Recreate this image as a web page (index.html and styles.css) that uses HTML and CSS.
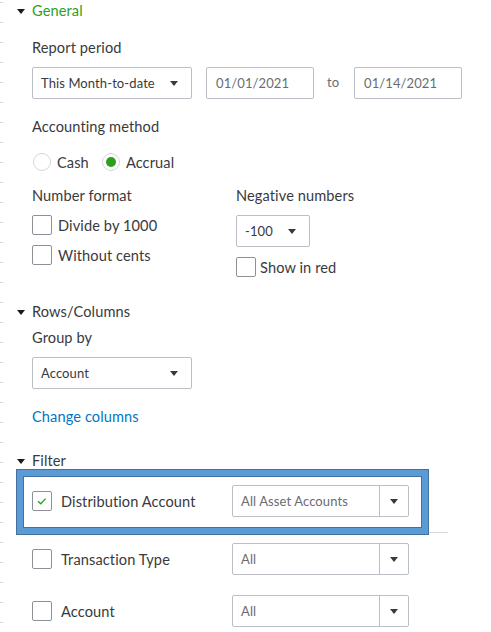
FILE: index.html
```html
<!DOCTYPE html>
<html>
<head>
<meta charset="utf-8">
<link rel="stylesheet" href="styles.css">
</head>
<body>
<div class="page">
  <div class="sec-head green"><span class="tri"></span>General</div>
  <div class="label lbl-report">Report period</div>
  <div class="period-row">
    <div class="select sel-period"><span>This Month-to-date</span><span class="arrow"></span></div>
    <div class="input date1">01/01/2021</div>
    <span class="to">to</span>
    <div class="input date2">01/14/2021</div>
  </div>
  <div class="label lbl-acct">Accounting method</div>
  <div class="radios">
    <label class="radio"><span class="circle"></span>Cash</label>
    <label class="radio"><span class="circle on"></span>Accrual</label>
  </div>
  <div class="two-col">
    <div class="col col-left">
      <div class="label">Number format</div>
      <label class="check c1"><span class="box"></span>Divide by 1000</label>
      <label class="check c2"><span class="box"></span>Without cents</label>
    </div>
    <div class="col col-right">
      <div class="label">Negative numbers</div>
      <div class="select sel-neg"><span>-100</span><span class="arrow"></span></div>
      <label class="check c3"><span class="box"></span>Show in red</label>
    </div>
  </div>
  <div class="sec-head rows-head"><span class="tri"></span>Rows/Columns</div>
  <div class="label lbl-group">Group by</div>
  <div class="select sel-group"><span>Account</span><span class="arrow"></span></div>
  <a class="link">Change columns</a>
  <div class="sec-head filter-head"><span class="tri"></span>Filter</div>
  <div class="filters">
    <div class="frow frow1">
      <span class="box checked"><svg width="12" height="10" viewBox="0 0 12 10"><path d="M2 5.2 L4.8 7.8 L9.6 2.6" fill="none" stroke="#2CA01C" stroke-width="1.3"/></svg></span>
      <span class="flabel">Distribution Account</span>
      <div class="fselect"><span class="ftext">All Asset Accounts</span><span class="farrow"><span class="arrow"></span></span></div>
      <div class="highlight"></div>
    </div>
    <div class="frow frow2">
      <span class="box"></span>
      <span class="flabel">Transaction Type</span>
      <div class="fselect"><span class="ftext">All</span><span class="farrow"><span class="arrow"></span></span></div>
    </div>
    <div class="frow frow3">
      <span class="box"></span>
      <span class="flabel">Account</span>
      <div class="fselect"><span class="ftext">All</span><span class="farrow"><span class="arrow"></span></span></div>
    </div>
  </div>
</div>
</body>
</html>
```
FILE: styles.css
```css
html, body {
  margin: 0;
  padding: 0;
  background: #fff;
}
body {
  font-family: Lato, "Open Sans", sans-serif;
  font-size: 14.6px;
  letter-spacing: 0.1px;
  color: #393a3d;
  width: 491px;
  height: 632px;
  overflow: hidden;
  background-image: repeating-linear-gradient(to bottom, transparent 0, transparent 2px, #d6d7da 2px, #d6d7da 3px, transparent 3px, transparent 20px);
  background-size: 3px 100%;
  background-repeat: no-repeat;
}
.page {
  padding: 1px 0 0 32px;
  position: relative;
}
.label {
  line-height: 20px;
  height: 20px;
}
.green { color: #2ca01c; }
.sec-head {
  margin-left: -15px;
  display: flex;
  align-items: center;
  line-height: 20px;
  height: 20px;
}
.tri {
  width: 0;
  height: 0;
  border-left: 4px solid transparent;
  border-right: 4px solid transparent;
  border-top: 5px solid #1a1a1a;
  margin-right: 7px;
}
.lbl-report { margin-top: 17px; }
.period-row {
  margin-top: 9px;
  display: flex;
  align-items: center;
  height: 32px;
}
.select {
  box-sizing: border-box;
  height: 32px;
  border: 1px solid #babec5;
  border-radius: 2px;
  display: flex;
  align-items: center;
  justify-content: space-between;
  padding: 0 13px 0 8px;
  font-size: 13px;
  letter-spacing: 0.1px;
  color: #393a3d;
}
.arrow {
  width: 0;
  height: 0;
  border-left: 4px solid transparent;
  border-right: 4px solid transparent;
  border-top: 5px solid #393a3d;
}
.sel-period { width: 160px; }
.input {
  box-sizing: border-box;
  height: 32px;
  width: 108px;
  border: 1px solid #babec5;
  border-radius: 2px;
  display: flex;
  align-items: center;
  padding-left: 9px;
  font-size: 13px;
  color: #6b6c72;
}
.date1 { margin-left: 14px; }
.to {
  margin: -3px 0 0 13px;
  width: 27px;
  font-size: 13px;
  color: #6b6c72;
}
.lbl-acct { margin-top: 18px; }
.radios {
  margin-top: 15px;
  display: flex;
  align-items: center;
  height: 20px;
}
.radio {
  display: flex;
  align-items: center;
  margin-left: 1px;
}
.radio + .radio { margin-left: 13px; }
.circle {
  box-sizing: border-box;
  width: 18px;
  height: 18px;
  border: 1px solid #d4d7dc;
  border-radius: 50%;
  margin-right: 6px;
  display: flex;
  align-items: center;
  justify-content: center;
}
.circle.on::after {
  content: "";
  width: 10px;
  height: 10px;
  border-radius: 50%;
  background: #2ca01c;
}
.two-col {
  margin-top: 14px;
  display: flex;
}
.col-left { width: 204px; }
.check {
  display: flex;
  align-items: center;
  height: 20px;
}
.box {
  box-sizing: border-box;
  width: 20px;
  height: 20px;
  border: 1px solid #8d9096;
  border-radius: 2px;
  margin-right: 6px;
  flex: none;
  display: flex;
  align-items: center;
  justify-content: center;
}
.c1 { margin-top: 9px; }
.c2 { margin-top: 10px; }
.sel-neg {
  margin-top: 9px;
  width: 74px;
  padding-right: 13px;
}
.c3 { margin-top: 10px; }
.c3 .box { margin-right: 4px; }
.rows-head { margin-top: 25px; }
.lbl-group { margin-top: 6px; }
.sel-group { margin-top: 9px; width: 160px; }
.link {
  display: block;
  margin-top: 18px;
  line-height: 20px;
  color: #0077c5;
  text-decoration: none;
}
.filter-head { margin-top: 24px; }
.filters { width: 416px; }
.frow {
  display: flex;
  align-items: center;
  position: relative;
}
.frow1 {
  margin-top: 14px;
  padding-bottom: 15px;
  border-bottom: 1px solid #d4d7dc;
}
.frow2 { margin-top: 10px; }
.frow3 { margin-top: 20px; }
.flabel {
  margin-left: 3px;
  width: 171px;
}
.fselect {
  box-sizing: border-box;
  width: 177px;
  height: 32px;
  border: 1px solid #babec5;
  border-radius: 2px;
  display: flex;
  align-items: stretch;
  font-size: 13px;
  color: #6b6c72;
}
.ftext {
  flex: 1;
  display: flex;
  align-items: center;
  padding-left: 8px;
  border-right: 1px solid #babec5;
}
.farrow {
  width: 28px;
  display: flex;
  align-items: center;
  justify-content: center;
}
.highlight {
  position: absolute;
  left: -16px;
  top: -16px;
  width: 413px;
  height: 66px;
  box-sizing: border-box;
  border: 1px solid #41719c;
  box-shadow: inset 0 0 0 6px #5b9bd5, inset 0 0 0 7px #41719c;
  pointer-events: none;
}
```
